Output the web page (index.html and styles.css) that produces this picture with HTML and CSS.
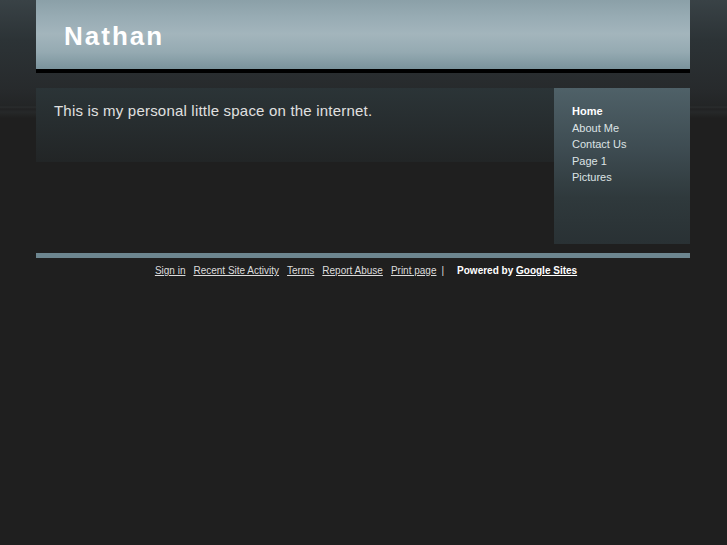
FILE: index.html
```html
<!DOCTYPE html>
<html lang="en">
<head>
    <meta charset="UTF-8">
    <title>Nathan</title>
    <link rel="stylesheet" href="styles.css">
</head>
<body>
    <div class="page">
        <!-- Header -->
        <header class="header">
            <a href="#" class="header__title">Nathan</a>
        </header>

        <!-- Main area -->
        <div class="main">
            <div class="content">
                <p>This is my personal little space on the internet.</p>
            </div>
            <nav class="sidebar">
                <a href="#" class="sidebar__link sidebar__link--current">Home</a>
                <a href="#" class="sidebar__link">About Me</a>
                <a href="#" class="sidebar__link">Contact Us</a>
                <a href="#" class="sidebar__link">Page 1</a>
                <a href="#" class="sidebar__link">Pictures</a>
            </nav>
        </div>

        <!-- Footer -->
        <div class="footer-bar"></div>
        <footer class="footer">
            <a href="#">Sign in</a>
            <a href="#">Recent Site Activity</a>
            <a href="#">Terms</a>
            <a href="#">Report Abuse</a>
            <a href="#">Print page</a>
            <span class="footer__sep">|</span>
            <span class="footer__powered">Powered by <a href="#">Google Sites</a></span>
        </footer>
    </div>
</body>
</html>
```

FILE: styles.css
```css
* {
    box-sizing: border-box;
    margin: 0;
    padding: 0;
}

html, body {
    height: 100%;
}

body {
    background: #1f1f1f linear-gradient(to bottom, #394246 0px, #2c3336 40px, #272a2c 90px, #232526 106px, #2a2d2e 107px, #212223 109px, #262829 112px, #1f1f1f 118px) no-repeat;
    font-family: "Liberation Sans", Arial, sans-serif;
    color: #dcdcdc;
}

.page {
    width: 654px;
    margin-left: 36px;
}

.header {
    height: 73px;
    padding: 21px 28px 0;
    background: linear-gradient(to bottom, #8ba0a8 0px, #97abb3 16px, #a3b5bc 34px, #95aab2 52px, #7a939c 69px);
    border-bottom: 4px solid #000;
}

.header__title {
    color: #fff;
    text-decoration: none;
    font-size: 26px;
    font-weight: bold;
    letter-spacing: 2px;
}

.main {
    display: flex;
    margin-top: 15px;
    align-items: flex-start;
}

.content {
    flex: 1;
    height: 74px;
    padding: 14px 18px 0;
    background: linear-gradient(to bottom, #2b3437 0px, #222526 74px);
    font-size: 15px;
    letter-spacing: 0.2px;
    color: #e0e0e0;
}

.sidebar {
    width: 136px;
    height: 156px;
    padding: 15px 18px;
    display: flex;
    flex-direction: column;
    background: linear-gradient(to bottom, #4f6168 0px, #3e4c52 60px, #2f393c 110px, #293134 156px);
}

.sidebar__link {
    color: #dde3e5;
    text-decoration: none;
    font-size: 11px;
    line-height: 16.5px;
}

.sidebar__link--current {
    font-weight: bold;
    color: #fff;
}

.footer-bar {
    height: 5px;
    margin-top: 9px;
    background: #6d8690;
}

.footer {
    display: flex;
    justify-content: center;
    gap: 8px;
    padding: 7px 0 0 6px;
    font-size: 10px;
    color: #dcdcdc;
}

.footer a {
    color: #dcdcdc;
}

.footer__sep {
    margin-left: -3px;
    margin-right: 5px;
}

.footer__powered {
    font-weight: bold;
    color: #fff;
}

.footer__powered a {
    color: #fff;
}
```
